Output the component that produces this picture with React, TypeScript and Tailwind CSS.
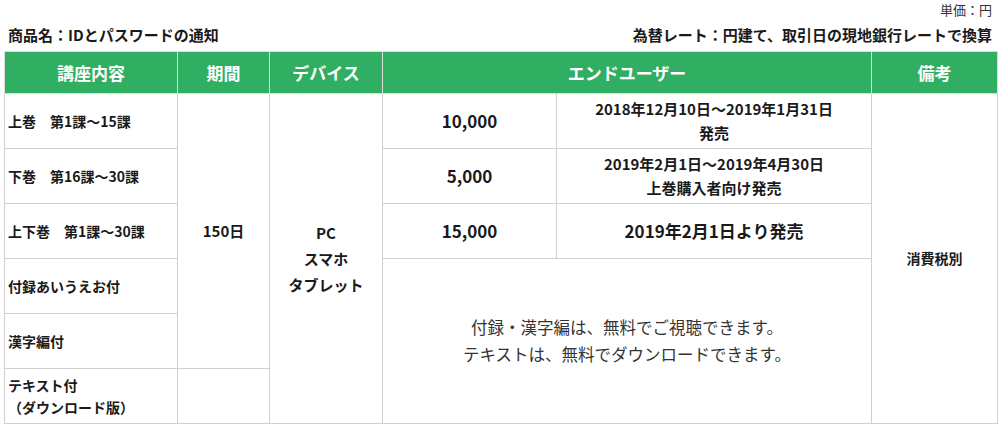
const font = { fontFamily: '"Noto Sans CJK JP", "Noto Sans", sans-serif' }

const rows = [
  { label: '上巻　第1課～15課', price: '10,000', note: ['2018年12月10日～2019年1月31日', '発売'] },
  { label: '下巻　第16課～30課', price: '5,000', note: ['2019年2月1日～2019年4月30日', '上巻購入者向け発売'] },
  { label: '上下巻　第1課～30課', price: '15,000', note: ['2019年2月1日より発売'] },
]

export default function App() {
  const cell = 'border border-[#d0d0d0]'
  const head = 'border border-[#dcdcdc] text-[17px] font-bold text-white'

  return (
    <div className="w-[1000px] bg-white px-[4px] text-[#1a1a1a]" style={font}>
      <div className="flex h-[20px] items-center justify-end pr-[4px] text-[13px] text-[#333]">
        単価：円
      </div>
      <div className="flex h-[31px] items-center justify-between px-[4px] text-[15px] font-bold">
        <span>商品名：IDとパスワードの通知</span>
        <span>為替レート：円建て、取引日の現地銀行レートで換算</span>
      </div>

      <table className="w-[993px] table-fixed border-collapse">
        <colgroup>
          <col className="w-[173px]" />
          <col className="w-[92px]" />
          <col className="w-[113px]" />
          <col className="w-[174px]" />
          <col className="w-[315px]" />
          <col className="w-[126px]" />
        </colgroup>
        <thead>
          <tr className="h-[42px] bg-[#30ae61]">
            <th className={head}>講座内容</th>
            <th className={head}>期間</th>
            <th className={head}>デバイス</th>
            <th className={head} colSpan={2}>
              エンドユーザー
            </th>
            <th className={head}>備考</th>
          </tr>
        </thead>
        <tbody className="font-bold">
          {rows.map((r, i) => (
            <tr key={r.label} className="h-[55px]">
              <td className={`${cell} px-[3px] text-[14px]`}>{r.label}</td>
              {i === 0 && (
                <>
                  <td className={`${cell} text-center text-[15px]`} rowSpan={5}>
                    150日
                  </td>
                  <td className={`${cell} text-center text-[15px] leading-[26px]`} rowSpan={6}>
                    PC
                    <br />
                    スマホ
                    <br />
                    タブレット
                  </td>
                </>
              )}
              <td className={`${cell} text-center text-[17px]`}>{r.price}</td>
              <td
                className={`${cell} text-center ${r.note.length > 1 ? 'text-[15px] leading-[24px]' : 'text-[17px]'}`}
              >
                {r.note.map((n) => (
                  <div key={n}>{n}</div>
                ))}
              </td>
              {i === 0 && (
                <td className={`${cell} text-center text-[14px]`} rowSpan={6}>
                  消費税別
                </td>
              )}
            </tr>
          ))}
          <tr className="h-[55px]">
            <td className={`${cell} px-[3px] text-[14px]`}>付録あいうえお付</td>
            <td
              className={`${cell} text-center text-[16.5px] font-normal leading-[27px] text-[#333]`}
              colSpan={2}
              rowSpan={3}
            >
              付録・漢字編は、無料でご視聴できます。
              <br />
              テキストは、無料でダウンロードできます。
            </td>
          </tr>
          <tr className="h-[55px]">
            <td className={`${cell} px-[3px] text-[14px]`}>漢字編付</td>
          </tr>
          <tr className="h-[55px]">
            <td className={`${cell} px-[3px] text-[14px] leading-[22px]`}>
              テキスト付
              <br />
              （ダウンロード版）
            </td>
            <td className={cell}></td>
          </tr>
        </tbody>
      </table>
    </div>
  )
}
